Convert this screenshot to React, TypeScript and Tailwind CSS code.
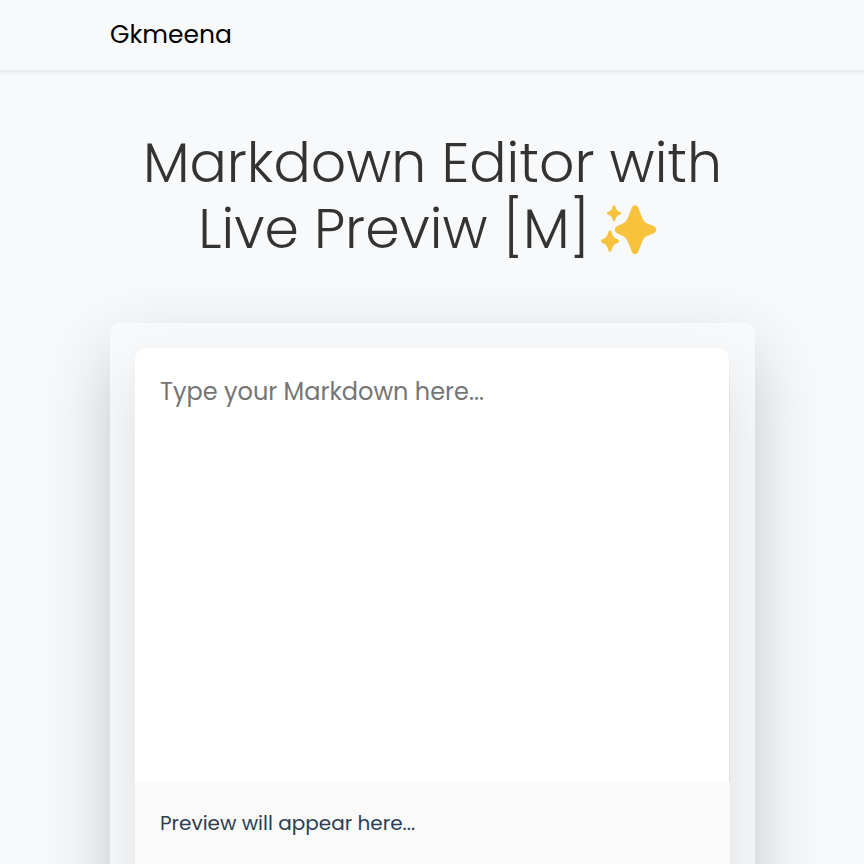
function Sparkles() {
  return (
    <svg viewBox="0 0 58 52" className="ml-[10px] mt-[8px] h-[52px] w-[58px] shrink-0" fill="#f8c33c">
      <path d="M35 1.3c1.6 0 2.6.9 3.2 2.4l3.6 9c1.6 4 2.5 5.6 6.500 7.200l5.000 2.100c1.800.7 2.900 1.800 2.900 3.700s-1.100 2.900-2.900 3.700l-5.000 2.100c-4 1.600-4.900 3.200-6.500 7.200l-3.600 9c-.6 1.500-1.600 2.400-3.200 2.400s-2.600-.9-3.200-2.400l-3.600-9c-1.600-4-2.500-5.600-6.500-7.200l-4-2.100c-1.800-.8-2.900-1.800-2.900-3.700s1.100-3 2.900-3.700l4-2.100c4-1.600 4.900-3.200 6.500-7.200l3.600-9C32.400 2.200 33.400 1.300 35 1.300Z" />
      <path d="M14 1.200c.7 0 1.100.4 1.400 1.200 1.100 3.600 1.600 4.400 4.800 5.600.6.3 1 .7 1 1.300s-.4 1-1 1.300c-3.200 1.200-3.700 2-4.800 5.500-.3.800-.7 1.200-1.400 1.200s-1.100-.4-1.400-1.200c-1.100-3.500-1.600-4.300-4.800-5.500-.6-.3-1-.7-1-1.300s.4-1 1-1.300c3.200-1.200 3.700-2 4.800-5.600.3-.8.7-1.200 1.400-1.200Z" />
      <path d="M10 26.500c.8 0 1.300.6 1.600 1.500 1.500 4.700 2.200 5.800 6 7.300.9.400 1.400 1.100 1.400 1.800s-.5 1.400-1.400 1.800c-3.800 1.500-4.500 2.600-6 7.300-.3.900-.8 1.500-1.600 1.500s-1.300-.6-1.600-1.500c-1.500-4.700-2.200-5.800-6-7.300C1.500 38.500 1 37.800 1 37.100s.5-1.400 1.400-1.800c3.800-1.500 4.500-2.600 6-7.300.3-.9.800-1.500 1.600-1.500Z" />
    </svg>
  );
}

export default function App() {
  return (
    <div className="h-[864px] overflow-hidden bg-[#f8f9fb] font-['Poppins','Inter',sans-serif]">
      <header className="relative -mx-3 h-[70px] bg-[#f8f9fb] px-[122px] pt-[16px] shadow-[0_2.5px_5px_rgba(0,0,0,0.075)]">
        <a className="block text-[25px] leading-[37.5px] text-black">Gkmeena</a>
      </header>
      <main className="px-[110px]">
        <h1 className="mx-auto pt-[60px] text-[55.3px] font-light leading-[66px] text-[#333333]">
          <span className="flex h-[66px] justify-center whitespace-nowrap pl-px">Markdown Editor with</span>
          <span className="flex h-[66px] justify-center whitespace-nowrap pr-[8px]">
            Live Previw [M]
            <Sparkles />
          </span>
        </h1>
        <section className="mt-[61px] h-[700px] w-[645px] rounded-[10px] bg-[#f8f9fb] p-[25px] shadow-[0_25px_75px_rgba(0,0,0,0.175)]">
          <div className="h-[650px] w-[595px] rounded-[12px] bg-[linear-gradient(#f8f9fb,#f1f2f4_12px,#dfe0e2_50px)] shadow-[0_25px_60px_rgba(0,0,0,0.1)]">
            <textarea
              className="block h-[434px] w-[594px] resize-none rounded-t-[12px] bg-white px-[25px] pt-[26px] text-[24px] leading-[36px] outline-none placeholder:text-[#757575]"
              placeholder="Type your Markdown here..."
            />
            <div className="h-[216px] bg-[#fafafa] px-[25px] pt-[26px] text-[20px] leading-[30px] text-[#2c3e50]">
              Preview will appear here...
            </div>
          </div>
        </section>
      </main>
    </div>
  );
}
